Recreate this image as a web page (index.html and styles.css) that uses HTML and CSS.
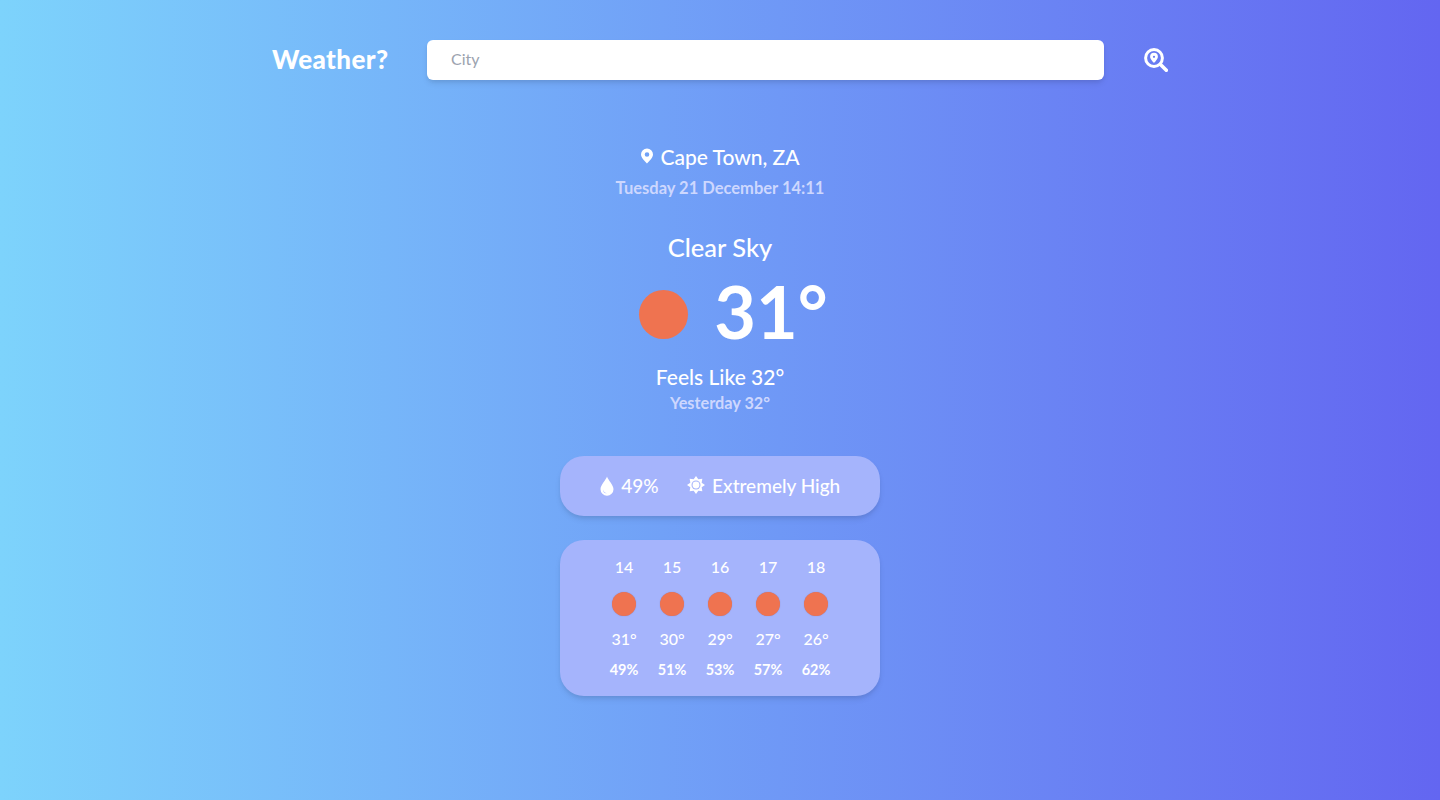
FILE: index.html
```html
<!DOCTYPE html>
<html lang="en">
<head>
<meta charset="utf-8">
<title>Weather?</title>
<link rel="stylesheet" href="styles.css">
</head>
<body>
<div class="page">
  <header class="header">
    <h1 class="logo">Weather?</h1>
    <input class="search" type="text" placeholder="City">
    <svg class="search-icon" viewBox="0 0 24 24" width="24" height="24">
      <circle cx="10" cy="10" r="8.4" fill="none" stroke="#fff" stroke-width="3"/>
      <path d="M16.5 16.5L22.300 22.300" stroke="#fff" stroke-width="3.600" stroke-linecap="round"/>
      <path fill="#fff" fill-rule="evenodd" d="M10 4.800a3.900 3.900 0 0 0-3.900 3.900c0 2.600 3.900 6.200 3.900 6.200s3.900-3.600 3.900-6.200A3.900 3.900 0 0 0 10 4.800zm0 2.900a1.100 1.100 0 1 1 0 2.200 1.100 1.100 0 0 1 0-2.200z"/>
    </svg>
  </header>
  <main class="main">
    <div class="location">
      <svg class="pin" viewBox="0 0 14 16" width="14" height="16"><path fill="#fff" fill-rule="evenodd" d="M7 0.500a6 6 0 0 0-6 6c0 3.600 6 9 6 9s6-5.400 6-9a6 6 0 0 0-6-6zm0 3.700a2.300 2.300 0 1 1 0 4.600 2.300 2.300 0 0 1 0-4.600z"/></svg>
      <span>Cape Town, ZA</span>
    </div>
    <p class="date">Tuesday 21 December 14:11</p>
    <p class="condition">Clear Sky</p>
    <div class="now">
      <span class="sun sun-big"></span>
      <span class="temp">31°</span>
    </div>
    <p class="feels">Feels Like 32°</p>
    <p class="yesterday">Yesterday 32°</p>
    <section class="panel stats">
      <div class="stat">
        <svg class="drop" viewBox="0 0 14 20" width="14" height="20"><path fill="#fff" fill-rule="evenodd" d="M7 0.500C6 4 0.500 9 0.500 13.200a6.500 6.500 0 0 0 13 0C13.500 9 8 4 7 0.500zM3.200 13.500c.2 2 1.500 3.400 3.600 3.700-2 .5-4-1.300-3.600-3.700z"/></svg>
        <span>49%</span>
      </div>
      <div class="stat">
        <svg viewBox="0 0 20 20" width="18" height="18">
          <path fill="#fff" d="M10 0L12.600 3.720 17.070 2.930 16.280 7.400 20 10 16.280 12.600 17.070 17.070 12.600 16.280 10 20 7.400 16.280 2.930 17.070 3.720 12.600 0 10 3.720 7.400 2.930 2.930 7.400 3.720z"/>
          <circle cx="10" cy="10" r="5" fill="#a5b4fc"/>
          <circle cx="10" cy="10" r="3.800" fill="#fff"/>
        </svg>
        <span>Extremely High</span>
      </div>
    </section>
    <section class="panel forecast">
      <div class="hour"><span class="h-time">14</span><span class="sun sun-small"></span><span class="h-temp">31°</span><span class="h-pct">49%</span></div>
      <div class="hour"><span class="h-time">15</span><span class="sun sun-small"></span><span class="h-temp">30°</span><span class="h-pct">51%</span></div>
      <div class="hour"><span class="h-time">16</span><span class="sun sun-small"></span><span class="h-temp">29°</span><span class="h-pct">53%</span></div>
      <div class="hour"><span class="h-time">17</span><span class="sun sun-small"></span><span class="h-temp">27°</span><span class="h-pct">57%</span></div>
      <div class="hour"><span class="h-time">18</span><span class="sun sun-small"></span><span class="h-temp">26°</span><span class="h-pct">62%</span></div>
    </section>
  </main>
</div>
</body>
</html>
```

FILE: styles.css
```css
* { box-sizing: border-box; margin: 0; padding: 0; }
html, body { height: 100%; }
body {
  font-family: "Lato", "Noto Sans", sans-serif;
  color: #fff;
  background: linear-gradient(to right, #7dd3fc, #6366f1);
  overflow: hidden;
}
.page { width: 896px; margin: 0 auto; padding-top: 40px; }
.header { display: flex; align-items: center; height: 40px; }
.logo { font-size: 26px; font-weight: 900; letter-spacing: .4px; line-height: 38px; height: 40px; width: 155px; white-space: nowrap; }
.search {
  flex: 1;
  height: 40px;
  border: 0;
  border-radius: 6px;
  background: #fff;
  padding: 0 24px 3px;
  font: 400 16px "Lato", sans-serif;
  box-shadow: 0 4px 6px -1px rgba(0,0,0,.1), 0 2px 4px -1px rgba(0,0,0,.06);
}
.search::placeholder { color: #9ca3af; }
.search-icon { margin-left: 40px; flex: none; }
.main { display: flex; flex-direction: column; align-items: center; padding-top: 62px; }
.location { display: flex; align-items: center; gap: 6px; font-size: 21px; font-weight: 500; height: 28px; }
.date { font-size: 16.500px; font-weight: 700; line-height: 24px; margin-top: 6px; color: #cdd7fe; }
.condition { font-size: 25.500px; font-weight: 500; line-height: 32px; margin-top: 31px; }
.now { display: flex; align-items: center; gap: 26px; height: 72px; margin: 12px 0 0 27px; }
.sun { display: block; border-radius: 50%; background: #ef7350; }
.sun-big { width: 49px; height: 49px; margin-top: 7px; }
.temp { font-size: 72px; font-weight: 700; line-height: 72px; }
.feels { font-size: 21px; font-weight: 500; line-height: 28px; margin-top: 16px; }
.yesterday { font-size: 16.300px; font-weight: 700; line-height: 24px; color: #cdd7fe; }
.panel {
  width: 320px;
  background: #a5b4fc;
  border-radius: 24px;
  box-shadow: 0 4px 6px -1px rgba(0,0,0,.1), 0 2px 4px -1px rgba(0,0,0,.06);
}
.stats { display: flex; justify-content: center; align-items: center; gap: 28px; height: 60px; margin-top: 41px; padding-bottom: 2px; font-size: 19px; font-weight: 500; }
.stat { display: flex; align-items: center; gap: 7.500px; }
.drop { margin-top: 2px; }
.forecast { display: flex; justify-content: center; height: 156px; margin-top: 24px; padding-top: 15px; }
.hour { width: 48px; display: flex; flex-direction: column; align-items: center; }
.h-time { font-size: 16px; font-weight: 500; line-height: 24px; }
.sun-small { width: 24px; height: 24px; margin-top: 13px; box-shadow: 0 0 1px rgba(120,80,120,.6); }
.h-temp { font-size: 16px; font-weight: 500; line-height: 24px; margin-top: 11px; }
.h-pct { font-size: 14.500px; font-weight: 700; line-height: 20px; margin-top: 9px; }
```
